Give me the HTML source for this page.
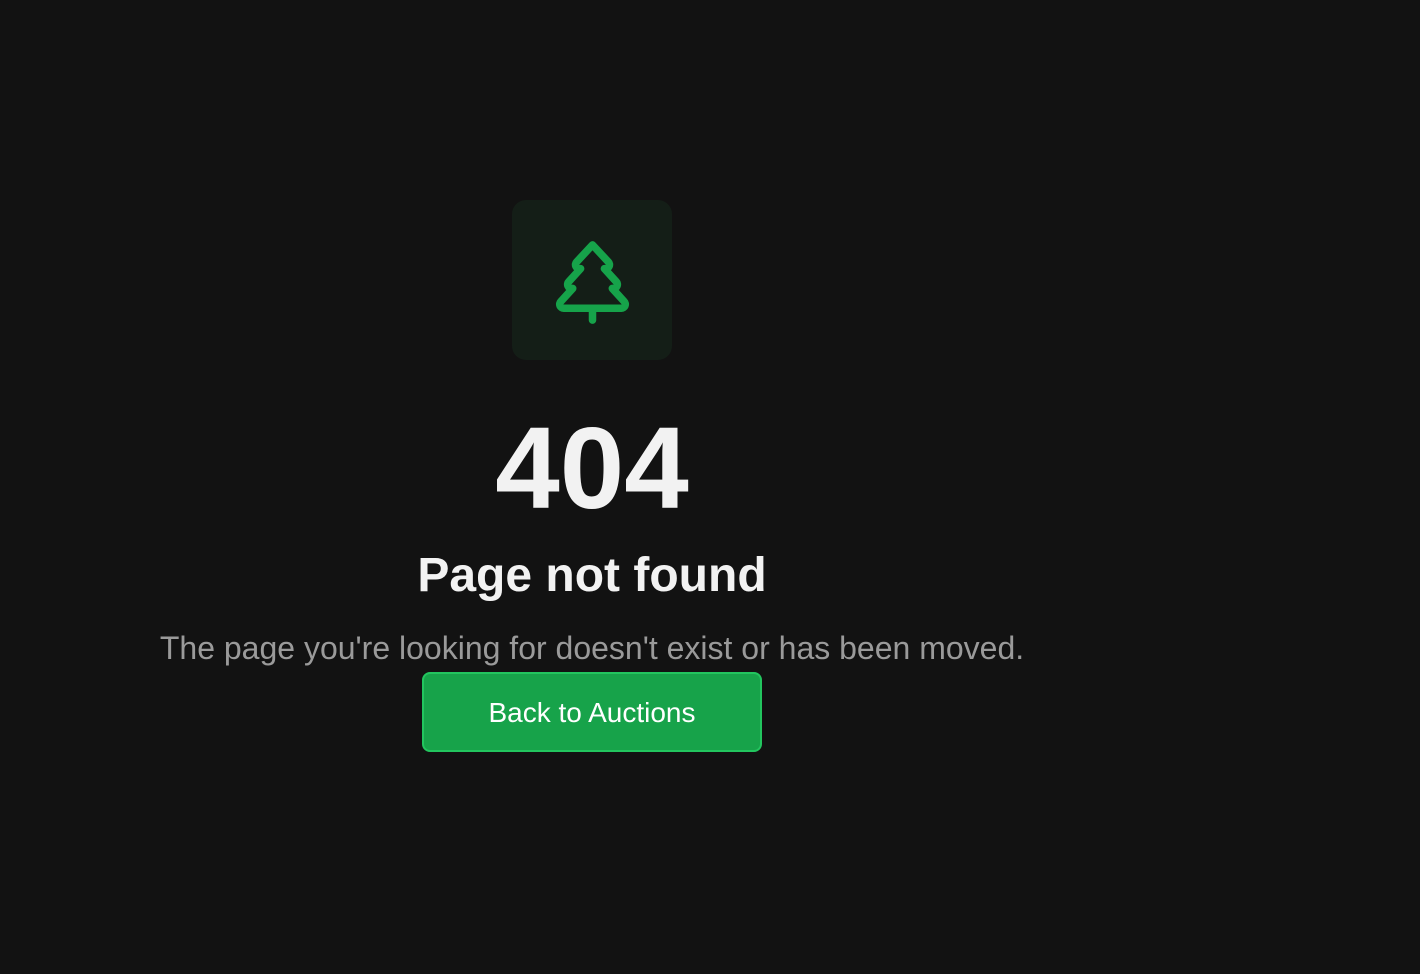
<!DOCTYPE html>
<html><head><meta charset="utf-8"><style>
html,body{margin:0;padding:0;background:#121212;width:1420px;height:974px;overflow:hidden;font-family:"Liberation Sans",Arial,sans-serif}
.box{position:absolute;left:512px;top:200px;width:160px;height:160px;border-radius:14px;background:#141e17}
.box svg{position:absolute;left:32.5px;top:32.5px}
.t{position:absolute;left:0;width:1184px;text-align:center;white-space:nowrap}
.n{top:400px;font-size:116px;font-weight:bold;color:#f2f2f2;line-height:136px}
.h{top:546px;font-size:48px;font-weight:bold;color:#f2f2f2;line-height:60px}
.p{top:628px;font-size:32px;color:#9a9a9a;line-height:40px}
.btn{position:absolute;left:422px;top:672px;width:336px;height:76px;background:#17a34a;border:2px solid #22c55e;border-radius:8px;color:#fff;font-size:28px;line-height:78px;text-align:center}
</style></head><body>
<div class="box"><svg width="95" height="95" viewBox="0 0 24 24" fill="none" stroke="#16a34a" stroke-width="1.9" stroke-linecap="round" stroke-linejoin="round"><path d="m17 14 3 3.3a1 1 0 0 1-.7 1.7H4.700a1 1 0 0 1-.7-1.700L7 14h-.3a1 1 0 0 1-.7-1.700L9 9h-.2A1 1 0 0 1 8 7.3L12 3l4 4.3a1 1 0 0 1-.8 1.7H15l3 3.3a1 1 0 0 1-.7 1.700H17Z"/><path d="M12 22v-3"/></svg></div>
<div class="t n">404</div>
<div class="t h">Page not found</div>
<div class="t p">The page you're looking for doesn't exist or has been moved.</div>
<div class="btn">Back to Auctions</div>
</body></html>
